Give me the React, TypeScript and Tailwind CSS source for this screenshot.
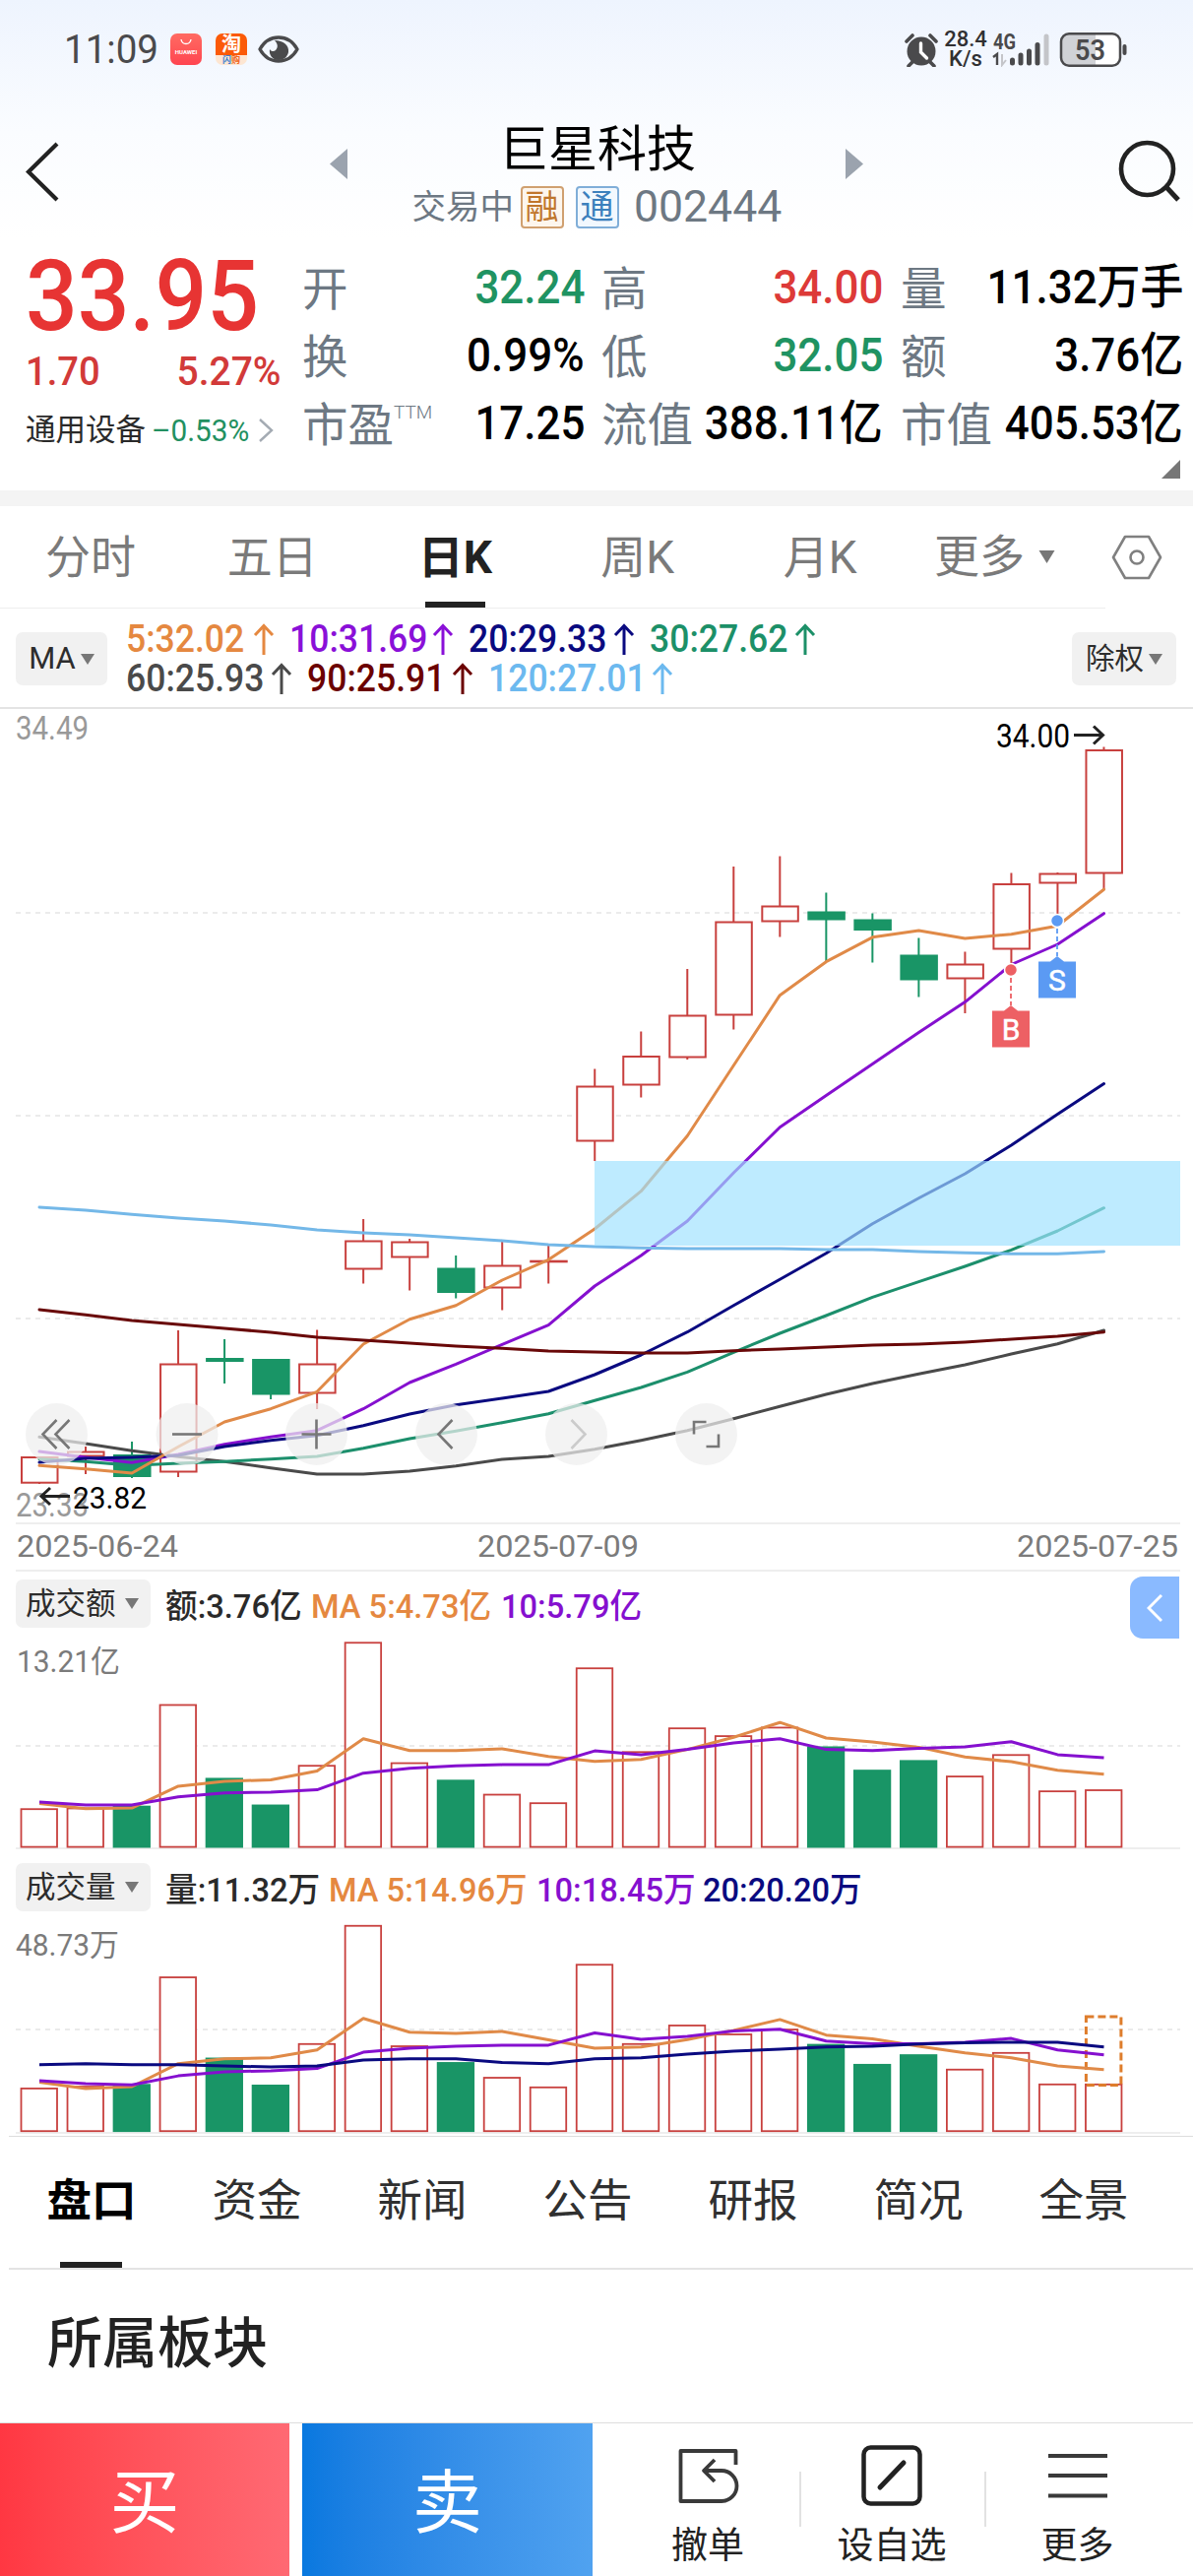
import React from "react";

const RED = "#c8403e";
const GREEN = "#199566";
const ORANGE = "#e08a48";
const PURPLE = "#8510cf";
const NAVY = "#0a0a80";

const cx = (i: number) => 40 + 47.02 * i;

type Candle = { up: boolean; top: number; bottom: number; high: number; low: number };
const c = (up: boolean, top: number, bottom: number, high: number, low: number): Candle => ({ up, top, bottom, high, low });

const candles: Candle[] = [
  c(true, 1480, 1505.7, 1480, 1507), c(true, 1474.5, 1478.5, 1469, 1497), c(false, 1478, 1499, 1464, 1501),
  c(true, 1385.5, 1494.5, 1351, 1500), c(false, 1380, 1382, 1360, 1405), c(false, 1381, 1415.5, 1380, 1421),
  c(true, 1385.5, 1414.5, 1350.5, 1431), c(true, 1260.5, 1288.5, 1238, 1303.5), c(true, 1261.5, 1276.5, 1258, 1310.5),
  c(false, 1288.5, 1312, 1275, 1318.5), c(true, 1285.5, 1307.5, 1261, 1330.5), c(true, 1280.7, 1281.3, 1265, 1303.5),
  c(true, 1103.5, 1158.5, 1085.5, 1179), c(true, 1073, 1101.5, 1047.5, 1114.5), c(true, 1031.5, 1073.5, 984, 1076),
  c(true, 936.5, 1030.5, 880, 1045.5), c(true, 920.5, 935.5, 869.5, 951.5), c(false, 926.5, 933.5, 906.5, 976),
  c(false, 934.5, 944, 927.5, 977.5), c(false, 970.5, 994.5, 952.5, 1012.5), c(true, 979.5, 993.5, 966.5, 1029),
  c(true, 898, 963.5, 886.5, 985), c(true, 887.5, 896.5, 886, 935), c(true, 762, 886.5, 758.5, 903),
];

const priceLines: { color: string; y: number[] }[] = [
  { color: "#4a4a4a", y: [1459.3, 1466, 1473.3, 1479.3, 1484.3, 1490.7, 1497, 1497, 1494, 1488.7, 1482, 1479, 1471.7, 1462.7, 1452.7, 1440.7, 1428.3, 1416, 1405, 1395.3, 1386, 1375, 1364.7, 1351] },
  { color: "#1c8f6c", y: [1481.7, 1484.3, 1488.3, 1486, 1484.3, 1481.7, 1479, 1470.7, 1461, 1453.3, 1444.7, 1435.7, 1422.3, 1409, 1393.3, 1373.3, 1354, 1336, 1317.3, 1301.7, 1286, 1269.3, 1250, 1226.7] },
  { color: PURPLE, y: [1474, 1480, 1485.3, 1477, 1466.7, 1459.3, 1452.7, 1430.7, 1404, 1385.3, 1365.3, 1345.7, 1306, 1275, 1240, 1191, 1144.7, 1112.5, 1080.4, 1048.6, 1017.6, 979.5, 959, 927.7] },
  { color: NAVY, y: [1485, 1481, 1480, 1478, 1469, 1462.7, 1457.7, 1447.7, 1436, 1426.7, 1420, 1413, 1396, 1376, 1352.7, 1325.7, 1299.3, 1272.7, 1242.7, 1216.7, 1192, 1163, 1131.6, 1100.6] },
  { color: ORANGE, y: [1488.3, 1491.7, 1496, 1469.3, 1444, 1430.7, 1413.3, 1365, 1339.7, 1325.7, 1300, 1279.3, 1248, 1209.7, 1153.5, 1082, 1010.7, 976.7, 951.8, 945, 953, 948.7, 940.3, 903.2] },
  { color: "#690808", y: [1330, 1335.3, 1341, 1345, 1349, 1353, 1358, 1361, 1364, 1367, 1369.3, 1372, 1373, 1374, 1374, 1371.7, 1370, 1368, 1366, 1365, 1363, 1360, 1357, 1352.7] },
  { color: "#74b8e8", y: [1226, 1229, 1233.3, 1237, 1240, 1244, 1249, 1252, 1254, 1257, 1260, 1264, 1266, 1267.3, 1268, 1268, 1268, 1269, 1269, 1271, 1272.3, 1273.3, 1273.3, 1271] },
];

const amountTops = [657, 655, 650, 376, 575, 647, 540, 208, 533, 580, 618, 641, 277, 503, 439, 460, 437, 490, 553, 527, 569, 511, 609, 606];
const amountMa = [
  { color: ORANGE, y: [642, 656, 654, 595, 582, 578, 554, 467, 499, 499, 494, 515, 528, 523, 496, 463, 423, 465, 476, 490, 516, 529, 552, 563] },
  { color: PURPLE, y: [638, 646, 646, 624, 613, 611, 605, 560, 547, 540, 537, 537, 500, 510, 496, 478, 467, 496, 499, 493, 489, 475, 510, 518] },
];
const volumeTops = [1411, 1406, 1401, 1111, 1330, 1403, 1291, 972, 1297, 1342, 1382, 1408, 1077, 1291, 1241, 1265, 1252, 1293, 1347, 1321, 1360, 1315, 1400, 1400];
const volumeMa = [
  { color: ORANGE, y: [1394, 1411, 1406, 1344, 1331, 1328, 1307, 1222, 1259, 1262, 1257, 1280, 1302, 1299, 1279, 1254, 1225, 1267, 1277, 1297, 1315, 1328, 1350, 1360] },
  { color: PURPLE, y: [1390, 1398, 1401, 1377, 1366, 1363, 1357, 1313, 1302, 1297, 1294, 1294, 1261, 1278, 1270, 1256, 1251, 1283, 1290, 1290, 1286, 1276, 1307, 1320] },
  { color: NAVY, y: [1347, 1344, 1347, 1347, 1350, 1353, 1350, 1334, 1331, 1331, 1341, 1344, 1331, 1328, 1318, 1310, 1305, 1299, 1297, 1291, 1288, 1286, 1286, 1299] },
];
const toY = (v: number) => 1590 + v / 2.6576;

const path = (ys: number[]) => ys.map((y, i) => `${cx(i).toFixed(1)},${y.toFixed(1)}`).join(" ");

function Label({ x, y, w, size, fill, weight = 400, children }: { x: number; y: number; w: number; size: number; fill: string; weight?: number; children: string }) {
  return (
    <text x={x} y={y} fontSize={size} fill={fill} fontWeight={weight} textLength={w} lengthAdjust="spacingAndGlyphs">
      {children}
    </text>
  );
}

function Dashed({ y }: { y: number }) {
  return <line x1="16" x2="1199" y1={y} y2={y} stroke="#ebebeb" strokeWidth="2" strokeDasharray="5 5" />;
}

function Caret({ className = "" }: { className?: string }) {
  return (
    <svg className={"shrink-0 " + className} width="14" height="11" viewBox="0 0 14 11">
      <path d="M0 0h14L7 11z" fill="#777" />
    </svg>
  );
}

function StatusBar() {
  return (
    <div className="flex h-[100px] items-center pl-[65px] pr-[66px] text-[#4a4a4c]">
      <div className="w-[108px] text-[41px] leading-[50px]">
        <span className="inline-block origin-left scale-x-[.94]">11:09</span>
      </div>
      <div className="flex h-8 w-8 flex-col items-center rounded-[7px] bg-gradient-to-b from-[#ff6a62] to-[#ff4450] pt-[5px]">
        <svg width="12" height="7" viewBox="0 0 12 7"><path d="M1 1c1 6 9 6 10 0" fill="none" stroke="#fff" strokeWidth="1.4" /></svg>
        <span className="mt-[3px] text-[6px] font-bold leading-[7px] text-white">HUAWEI</span>
      </div>
      <div className="ml-[14px] flex h-8 w-8 flex-col items-center overflow-hidden rounded-[7px] bg-[#fde6d2]">
        <div className="h-[22px] w-full bg-[#fb5a08] text-center text-[20px] font-bold leading-[22px] text-white">淘</div>
        <div className="text-[9px] font-bold leading-[10px] text-[#f0641a]"><span className="text-[#3a7fd0]">闪</span>购</div>
      </div>
      <svg className="ml-[11px]" width="42" height="32" viewBox="0 0 42 32">
        <path d="M2 16C11 0 31 0 40 16C31 32 11 32 2 16z" fill="none" stroke="#4a4a4c" strokeWidth="3.4" strokeLinejoin="round" />
        <path d="M17 7C26 7 32 12 31 19C30 24 26 27 21 27C15 27 11 22 12 16C13 18 16 19 18 17C21 14 20 10 17 7z" fill="#4a4a4c" />
      </svg>
      <div className="flex-1" />
      <svg width="34" height="35" viewBox="0 0 34 35" className="mr-[7px]">
        <circle cx="17" cy="19" r="14.5" fill="#4a4a4c" />
        <path d="M2 9l6-6M32 9l-6-6M8 30l-4 4M26 30l4 4" stroke="#4a4a4c" strokeWidth="3.6" strokeLinecap="round" />
        <path d="M16.500 11v9l6 6" stroke="#fff" strokeWidth="3.4" fill="none" strokeLinecap="round" />
      </svg>
      <div className="flex w-[42px] flex-col items-center text-[22px] font-medium leading-5 text-[#303032]">
        <span className="inline-block whitespace-nowrap">28.4</span>
        <span className="inline-block">K/s</span>
      </div>
      <svg className="ml-[6px]" width="60" height="36" viewBox="0 0 60 36">
        <text x="1" y="18" fontSize="22" fontWeight="700" fill="#4a4a4c" textLength="23" lengthAdjust="spacingAndGlyphs">4G</text>
        <path d="M1 26l4-3v11" stroke="#4a4a4c" strokeWidth="2.4" fill="none" />
        <path d="M10 23v11l4-5" stroke="#c4c5c9" strokeWidth="2" fill="none" />
        <path d="M20.500 29v3M29 24v8M37.500 20v12M46 13.500v18.500" stroke="#4a4a4c" strokeWidth="5" strokeLinecap="round" />
        <path d="M55 5v27" stroke="#c4c5c9" strokeWidth="5" strokeLinecap="round" />
      </svg>
      <svg className="ml-[8px]" width="70" height="36" viewBox="0 0 70 36">
        <rect x="2.500" y="2.500" width="59" height="32" rx="8" fill="#fff" />
        <path d="M37 2.500H10a8 8 0 0 0-8 8V26a8 8 0 0 0 8 8.500h27z" fill="#d0d2d6" />
        <rect x="2" y="2.200" width="60" height="32.500" rx="8" fill="none" stroke="#4a4a4c" strokeWidth="2.500" />
        <rect x="64.500" y="13" width="4" height="11" rx="2" fill="#4a4a4c" />
        <text x="16" y="29" fontSize="30" fontWeight="600" fill="#4a4a4c" textLength="31" lengthAdjust="spacingAndGlyphs">53</text>
      </svg>
    </div>
  );
}

function Header() {
  return (
    <div className="flex h-[142px] pl-6 pr-3">
      <svg className="mt-[43px]" width="40" height="64" viewBox="0 0 40 64">
        <path d="M34 3L5 31.500L34 60" fill="none" stroke="#222" strokeWidth="4.200" />
      </svg>
      <div className="ml-[271px] flex pt-[22px]">
        <svg className="mt-[29px]" width="18" height="31" viewBox="0 0 18 31"><path d="M18 0v31L0 15.500z" fill="#9ba3ae" /></svg>
        <div className="flex w-[506px] flex-col items-center">
          <h1 className="pl-[2px] text-[50px] leading-[60px] text-black">巨星科技</h1>
          <div className="mt-[5px] flex h-[46px] items-center text-[#6d7883]">
            <span className="w-[110px] text-[34.500px] leading-[46px]">交易中</span>
            <span className="flex h-[43px] w-[44px] items-center justify-center rounded-[4px] border-2 border-[#d0a070] bg-[#fdf6ee] text-[34px] leading-none text-[#c0762c]">融</span>
            <span className="ml-[12px] flex h-[43px] w-[44px] items-center justify-center rounded-[4px] border-2 border-[#80aed8] bg-[#f2f8fe] text-[34px] leading-none text-[#3c80bd]">通</span>
            <span className="ml-[15px] w-[150px] whitespace-nowrap text-[45px] leading-[46px]"><span className="inline-block origin-left scale-x-[.99]">002444</span></span>
          </div>
        </div>
        <svg className="mt-[29px]" width="18" height="31" viewBox="0 0 18 31"><path d="M0 0v31l18-15.500z" fill="#9ba3ae" /></svg>
      </div>
      <svg className="ml-auto mt-[42px]" width="66" height="64" viewBox="0 0 66 64">
        <circle cx="31.500" cy="29.500" r="26.500" fill="none" stroke="#222" strokeWidth="4.600" />
        <path d="M50 47L63 61" stroke="#222" strokeWidth="5" />
      </svg>
    </div>
  );
}

const quotes = [
  [["开", "32.24", "text-[#1f9362]"], ["高", "34.00", "text-[#dd3a38]"], ["量", "11.32万手", "text-black"]],
  [["换", "0.99%", "text-black"], ["低", "32.05", "text-[#1f9362]"], ["额", "3.76亿", "text-black"]],
  [["市盈", "17.25", "text-black"], ["流值", "388.11亿", "text-black"], ["市值", "405.53亿", "text-black"]],
];

function Quote() {
  return (
    <div className="flex h-[256px] pr-[10px]">
      <div className="w-[307px] pl-[26px] pt-[1px]">
        <div className="h-[112px] whitespace-nowrap text-[101px] font-medium leading-[112px] text-[#e73433]">
          <span className="inline-block origin-left translate-y-[2px] scale-x-[.92]">33.95</span>
        </div>
        <div className="flex h-[46px] w-[259px] justify-between text-[41px] font-medium leading-[44px] text-[#d23a39]">
          <span className="inline-block origin-left scale-x-[.93]">1.70</span>
          <span className="inline-block origin-right scale-x-[.95]">5.27%</span>
        </div>
        <div className="mt-[18px] flex h-9 items-center text-[30.500px] leading-9 text-[#2a2a2a]">
          <span className="w-[128px]">通用设备</span>
          <span className="w-[108px] whitespace-nowrap text-[#229061]"><span className="inline-block origin-left scale-x-[.93] text-[32px]">–0.53%</span></span>
          <svg className="shrink-0" width="16" height="26" viewBox="0 0 16 26"><path d="M2 2l12 11L2 24" fill="none" stroke="#a4abb3" strokeWidth="2.400" /></svg>
        </div>
      </div>
      <div className="flex flex-1 flex-col pt-[15px]">
        {quotes.map((row, r) => (
          <div key={r} className="flex h-[69px] items-center text-[46.500px] leading-[60px]">
            {row.map(([label, value, color], k) => (
              <div key={label} className={"flex items-center justify-between " + (k === 0 ? "w-[287px]" : k === 1 ? "ml-[17px] w-[286px]" : "ml-[18px] w-[287px]")}>
                <span className="flex shrink-0 translate-y-[2px] whitespace-nowrap text-[#6d7883]">
                  {label}
                  {label === "市盈" && <span className="-mt-[13px] text-[19px] font-light">TTM</span>}
                </span>
                <span className="w-0 whitespace-nowrap text-[48px] font-medium [direction:rtl]">
                  <span className={"inline-block origin-right scale-x-[.915] [direction:ltr] " + color}>{value}</span>
                </span>
              </div>
            ))}
          </div>
        ))}
        <svg className="ml-auto mr-[3px] mt-[3px]" width="19" height="19" viewBox="0 0 19 19"><path d="M19 0v19H0z" fill="#777" /></svg>
      </div>
    </div>
  );
}

function PeriodTabs() {
  return (
    <div className="flex h-[103px] text-[46px] leading-[105px] text-[#7a7a7a]">
      {["分时", "五日", "日K", "周K", "月K"].map((t) => (
        <div key={t} className="relative w-[185.500px] text-center first:w-[184px]">
          {t === "日K" ? <b className="font-bold text-[#222]">{t}</b> : t}
          {t === "日K" && <div className="absolute bottom-0 left-[62px] h-[6px] w-[61px] bg-[#222]" />}
        </div>
      ))}
      <div className="ml-[23px] flex items-center">
        更多
        <svg className="ml-[14px]" width="17" height="13" viewBox="0 0 16 13"><path d="M0 0h16L8 13z" fill="#777" /></svg>
      </div>
      <svg className="ml-[57px] mt-[28px]" width="52" height="48" viewBox="0 0 52 48">
        <path d="M14 3h24l12 21-12 21H14L2 24z" fill="none" stroke="#808080" strokeWidth="2.600" strokeLinejoin="round" />
        <circle cx="26" cy="24" r="6.500" fill="none" stroke="#808080" strokeWidth="2.600" />
      </svg>
    </div>
  );
}

const maRows = [
  [["5:32.02", "w-[166px] text-[#e58840]"], ["10:31.69", "w-[182px] text-[#8a10d8]"], ["20:29.33", "w-[184px] text-[#0a0a80]"], ["30:27.62", "w-[184px] text-[#1c9068]"]],
  [["60:25.93", "w-[184px] text-[#4a4a4a]"], ["90:25.91", "w-[184px] text-[#6b0000]"], ["120:27.01", "w-[203px] text-[#6cb9ef]"]],
];

function MaLegend() {
  return (
    <div className="flex h-[102px] items-start border-b-2 border-[#e4e4e4] pl-4 pr-[17px]">
      <div className="mt-[24px] flex h-[54px] w-[93px] items-center justify-center rounded-[7px] bg-[#f1f1f1] text-[31px] text-[#2d2d2d]">
        <span className="inline-block">MA</span><Caret className="ml-[5px]" />
      </div>
      <div className="ml-[19px] flex-1 pt-[11px]">
        {maRows.map((row, i) => (
          <div key={i} className="flex h-10 text-[38px] font-medium leading-10">
            {row.map(([t, cls]) => (
              <div key={t} className={"flex shrink-0 justify-between whitespace-nowrap pr-[15px] " + cls}>
                <span className="inline-block w-0 origin-left"><span className="inline-block origin-left scale-x-[.935]">{t}</span></span>
                <svg className="mt-[3px]" width="22" height="33" viewBox="0 0 22 33"><path d="M11 33V4M2 13l9-9.500L20 13" fill="none" stroke="currentColor" strokeWidth="3" /></svg>
              </div>
            ))}
          </div>
        ))}
      </div>
      <div className="mt-[24px] flex h-[54px] w-[106px] items-center justify-center rounded-[7px] bg-[#f1f1f1] text-[29.500px] text-[#2d2d2d]">
        除权<Caret className="ml-[5px]" />
      </div>
    </div>
  );
}

function Marker({ x, y, line, color, letter }: { x: number; y: number; line: number; color: string; letter: string }) {
  return (
    <g>
      <line x1={x} x2={x} y1={y} y2={line} stroke={color} strokeWidth="1.800" strokeDasharray="5 3" />
      <circle cx={x} cy={y} r="6.500" fill={color} stroke="#fff" strokeWidth="1.500" />
      <path d={`M${x} ${line}l7 5.500h12v37h-38v-37h12z`} fill={color} />
      <text x={x} y={line + 35} fontSize="30" fill="#fff" stroke="#fff" strokeWidth=".5" textAnchor="middle">{letter}</text>
    </g>
  );
}

const controls: { x: number; d: string; light?: boolean }[] = [
  { x: 57.5, d: "M0 -14.500l-14 14.500l14 14.500M13 -14.500l-14 14.500l14 14.500" },
  { x: 190, d: "M-15 0h30" },
  { x: 321.5, d: "M-15 0h30M0 -15v30" },
  { x: 453.5, d: "M6 -14.500l-14 14.500l14 14.500" },
  { x: 585.5, d: "M-5 -14.500l14 14.500l-14 14.500", light: true },
  { x: 717.5, d: "M-12.500 0v-12.500h12.500M0 12.500h12.500v-12.500" },
];

function PriceChart() {
  return (
    <svg className="block" width="1212" height="876" viewBox="0 720 1212 876">
      <Dashed y={927} /><Dashed y={1133} /><Dashed y={1339} />
      <Label x={16} y={751} w={74} size={33} fill="#999">34.49</Label>
      <Label x={16} y={1540} w={74} size={33} fill="#999">23.33</Label>
      {candles.map((k, i) => {
        const color = k.up ? RED : GREEN;
        const x = cx(i);
        return (
          <g key={i} stroke={color} strokeWidth="2">
            <path d={`M${x} ${k.high}V${k.top}M${x} ${k.bottom}V${k.low}`} />
            <rect x={x - 18} y={k.top} width="36.500" height={k.bottom - k.top} fill={k.up ? "#fff" : color} />
          </g>
        );
      })}
      {priceLines.map((l) => (
        <polyline key={l.color} points={path(l.y)} fill="none" stroke={l.color} strokeWidth="3" strokeLinejoin="round" strokeLinecap="round" />
      ))}
      <rect x="604" y="1179" width="595" height="86" fill="#9ee1ff" fillOpacity=".67" />
      <Marker x={1074} y={935} line={971} color="#5b9af3" letter="S" />
      <Marker x={1027} y={985} line={1021} color="#ed6064" letter="B" />
      <Label x={1012} y={759} w={75} size={33} fill="#000">34.00</Label>
      <path d="M1091 746.500H1120M1111 737.500l9.500 9l-9.500 9" fill="none" stroke="#222" strokeWidth="3" />
      {controls.map((b) => (
        <g key={b.x} transform={`translate(${b.x} 1456.500)`}>
          <circle r="31.500" fill="#efefef" fillOpacity=".72" />
          <path d={b.d} fill="none" stroke={b.light ? "#cbcbcb" : "#777"} strokeWidth="2.600" />
        </g>
      ))}
      <path d="M71 1519.500H42M51 1511l-9 8.500l9 8.500" fill="none" stroke="#222" strokeWidth="3" />
      <Label x={74} y={1532} w={75} size={32} fill="#000">23.82</Label>
      <path d="M16 1547H1199M16 1595H1199" stroke="#eee" strokeWidth="2" />
      <Label x={17} y={1581} w={164} size={32} fill="#7b7b7b">2025-06-24</Label>
      <Label x={485} y={1581} w={164} size={32} fill="#7b7b7b">2025-07-09</Label>
      <Label x={1033} y={1581} w={164} size={32} fill="#7b7b7b">2025-07-25</Label>
    </svg>
  );
}

function Bars({ tops, base }: { tops: number[]; base: number }) {
  return (
    <>
      {tops.map((v, i) => {
        const y = toY(v);
        const up = candles[i].up;
        return <rect key={i} x={cx(i) - 18.5} y={y} width="36.500" height={base - y} fill={up ? "#fff" : GREEN} stroke={up ? RED : GREEN} strokeWidth="1.800" />;
      })}
    </>
  );
}

function SubHeader({ name, items }: { name: string; items: [string, string][] }) {
  return (
    <div className="flex items-center pl-4">
      <div className="flex h-[49px] w-[137px] items-center rounded-[7px] bg-[#f1f1f1] pl-[10px] text-[30.500px] leading-[49px] text-[#2d2d2d]">
        {name}<Caret className="ml-[9px]" />
      </div>
      <div className="ml-[15px] flex translate-y-[3px] text-[34px] font-medium leading-[49px]">
        {items.map(([t, cls]) => (
          <div key={t} className={"shrink-0 whitespace-nowrap " + cls}><span className="inline-block origin-left scale-x-[.96]">{t}</span></div>
        ))}
      </div>
    </div>
  );
}

function VolumePanels() {
  return (
    <>
      <div className="relative h-[288px] pt-[8px]">
        <SubHeader name="成交额" items={[["额:3.76亿", "w-[148px] text-[#2a2a2a]"], ["MA 5:4.73亿", "w-[193px] text-[#e58840]"], ["10:5.79亿", "text-[#8510cf]"]]} />
        <svg className="block" width="1212" height="231" viewBox="0 1653 1212 231">
          <Dashed y={1773} />
          <path d="M16 1877H1199" stroke="#eee" strokeWidth="2" />
          <Label x={17} y={1698} w={105} size={31} fill="#7b7b7b">13.21亿</Label>
          <Bars tops={amountTops} base={1875.6} />
          {amountMa.map((l) => <polyline key={l.color} points={path(l.y.map(toY))} fill="none" stroke={l.color} strokeWidth="3" strokeLinejoin="round" />)}
        </svg>
        <div className="absolute right-[14px] top-[5px] flex h-[63px] w-[50px] items-center justify-center rounded-l-[13px] bg-[#8abaff]">
          <svg width="16" height="30" viewBox="0 0 16 30"><path d="M15 2L2 15l13 13" fill="none" stroke="#fff" strokeWidth="3" /></svg>
        </div>
      </div>
      <div className="h-[286px] pt-[8px]">
        <SubHeader name="成交量" items={[["量:11.32万", "w-[166px] text-[#2a2a2a]"], ["MA 5:14.96万", "w-[211px] text-[#e58840]"], ["10:18.45万", "w-[169px] text-[#8510cf]"], ["20:20.20万", "text-[#0a0a80]"]]} />
        <svg className="block" width="1212" height="229" viewBox="0 1941 1212 229">
          <Dashed y={2061} />
          <path d="M16 2166H1199" stroke="#eee" strokeWidth="2" />
          <path d="M9 2169.500H1212" stroke="#ddd" strokeWidth="1" />
          <Label x={16} y={1986} w={105} size={31} fill="#7b7b7b">48.73万</Label>
          <Bars tops={volumeTops} base={2164.2} />
          <rect x="1103.400" y="2048" width="35.500" height="69.500" fill="none" stroke="#de7d2c" strokeWidth="3" strokeDasharray="8 4" />
          {volumeMa.map((l) => <polyline key={l.color} points={path(l.y.map(toY))} fill="none" stroke={l.color} strokeWidth="3" strokeLinejoin="round" />)}
        </svg>
      </div>
    </>
  );
}

function InfoTabs() {
  return (
    <div className="ml-[9px] flex h-[135px] border-b-2 border-[#e3e3e3] text-[45.500px] leading-[132px] text-[#303030]">
      {["盘口", "资金", "新闻", "公告", "研报", "简况", "全景"].map((t, i) => (
        <div key={t} className="relative w-[168px] shrink-0 text-center">
          {i === 0 ? <b className="text-black">{t}</b> : t}
          {i === 0 && <div className="absolute bottom-0 left-[52px] h-[6px] w-[63px] bg-[#222]" />}
        </div>
      ))}
    </div>
  );
}

function BottomBar() {
  return (
    <div className="flex h-[156px] border-t border-[#ddd] text-[37px] leading-[44px] text-[#222]">
      <div className="w-[294px] bg-gradient-to-r from-[#ff3742] to-[#ff6973] text-center text-[71px] leading-[162px] text-white">买</div>
      <div className="ml-[13px] w-[295px] bg-gradient-to-r from-[#0878df] to-[#50a2f0] text-center text-[71px] leading-[162px] text-white">卖</div>
      <div className="ml-[22px] flex w-[188px] flex-col items-center pt-[22px]">
        <svg width="62" height="62" viewBox="0 0 62 62" className="ml-[4px]">
          <path d="M58.500 20V6H2.500V57H44a15.500 15.500 0 0 0 0-31H26M37 15L26 26l11 11" fill="none" stroke="#3a3a3a" strokeWidth="3.800" strokeLinejoin="round" />
        </svg>
        <div className="ml-[2px] mt-[19px]">撤单</div>
      </div>
      <div className="mt-[49px] h-14 w-[2px] bg-[#e2e2e2]" />
      <div className="flex w-[186px] flex-col items-center pr-[2px] pt-[21px]">
        <svg width="62" height="64" viewBox="0 0 62 64">
          <rect x="2.500" y="3.500" width="57" height="57" rx="7" fill="none" stroke="#222" strokeWidth="4.500" />
          <path d="M19 44L43 19" stroke="#222" strokeWidth="5" strokeLinecap="round" />
        </svg>
        <div className="mt-[18px]">设自选</div>
      </div>
      <div className="mt-[49px] h-14 w-[2px] bg-[#e2e2e2]" />
      <div className="flex w-[187px] flex-col items-center pr-[2px] pt-[21px]">
        <svg width="62" height="64" viewBox="0 0 62 64">
          <path d="M1 12h60M1 32h60M1 52.500h60" stroke="#3a3a3a" strokeWidth="4.200" />
        </svg>
        <div className="mt-[18px]">更多</div>
      </div>
    </div>
  );
}

export default function App() {
  return (
    <div className="h-[2616px] w-[1212px] overflow-hidden bg-white font-['Roboto','Noto_Sans_CJK_SC',sans-serif]">
      <div className="bg-gradient-to-b from-[#eef4fe] via-[#fafcff] via-55% to-white">
        <StatusBar />
        <Header />
      </div>
      <Quote />
      <div className="h-[16px] bg-[#f4f4f4]" />
      <PeriodTabs />
      <div className="mr-[89px] h-px bg-[#eee]" />
      <MaLegend />
      <PriceChart />
      <VolumePanels />
      <InfoTabs />
      <div className="flex h-[155px] items-center pb-[5px] pl-[48px] text-[56px] font-medium text-[#222]">所属板块</div>
      <BottomBar />
    </div>
  );
}
